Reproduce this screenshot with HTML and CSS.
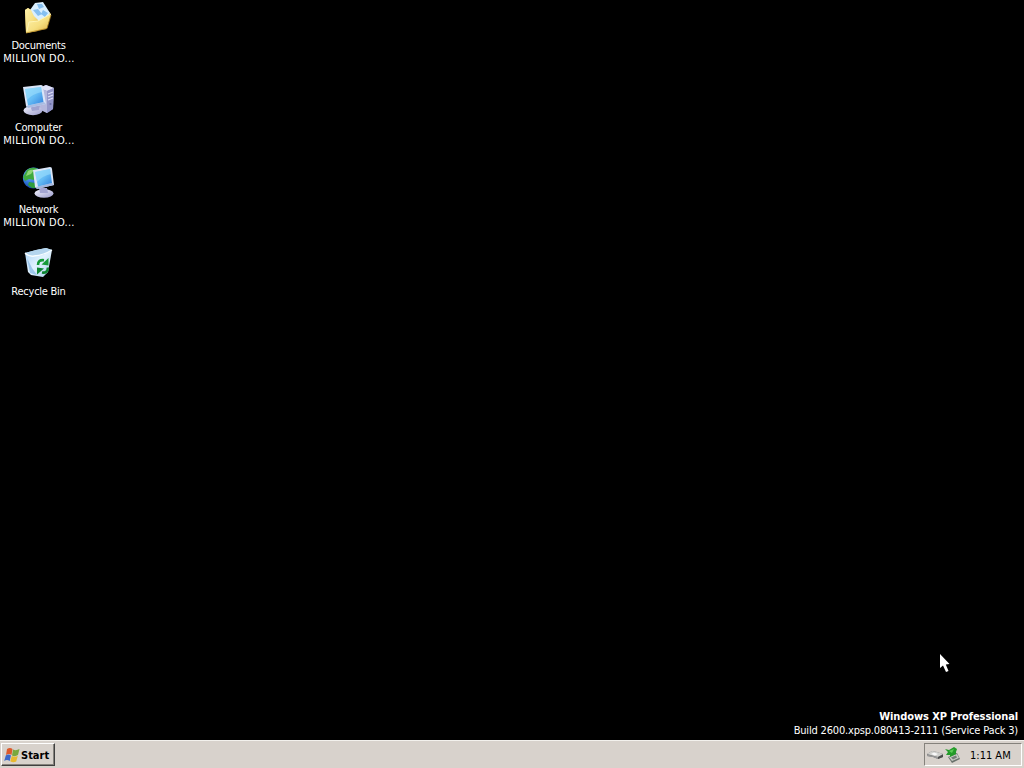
FILE: index.html
```html
<!DOCTYPE html>
<html lang="en">
<head>
  <meta charset="UTF-8" />
  <meta name="viewport" content="width=device-width, initial-scale=1.0" />
  <title>Desktop</title>
  <link rel="stylesheet" href="styles.css">
</head>
<body>
  <main class="desktop">
    <div class="icons">
      <div class="shortcut">
        <svg width="32" height="32" viewBox="0 0 32 32">
          <defs>
            <linearGradient id="folder" x1="0" y1="0" x2="1" y2="1">
              <stop offset="0" stop-color="#fff3ae" />
              <stop offset="0.55" stop-color="#f6df80" />
              <stop offset="1" stop-color="#dcae3f" />
            </linearGradient>
            <linearGradient id="screen" x1="0" y1="0" x2="1" y2="1">
              <stop offset="0" stop-color="#7fd4fb" />
              <stop offset="0.5" stop-color="#66bdf5" />
              <stop offset="1" stop-color="#2f7fdc" />
            </linearGradient>
            <linearGradient id="metal" x1="0" y1="0" x2="1" y2="1">
              <stop offset="0" stop-color="#f4f5ff" />
              <stop offset="1" stop-color="#9a9bcb" />
            </linearGradient>
          </defs>
          <path d="M3 8 L6 6 L9 8 L12 11 L26 9 L29 12 L24 27 L4 31 Z" fill="#e3bd55" />
          <path d="M8 8 L13 1 L21 0 L28 11 L21 21 L12 17 Z" fill="#d9efff" />
          <path d="M15 2 L20 2 L22 5 L17 7 Z M11 8 L16 7 L20 12 L16 14 Z M21 8 L26 11 L23 15 L19 12 Z" fill="#85bff0" />
          <path d="M3 8 L6 6 L9 8 L12 14 L16 18 L16 29 L4 31 Z" fill="url(#folder)" />
          <path d="M4 31 L7 20 L16 19 L29 12 L25 26 Z" fill="url(#folder)" />
          <path d="M5 29 L7 20 L16 19 L29 12" fill="none" stroke="#fff5b5" stroke-width="1" />
          <path d="M4 31 L25 26.5 L29 13" fill="none" stroke="#b88b28" stroke-width="0.8" />
        </svg>
        <span class="label">Documents</span>
        <span class="owner">MILLION DO...</span>
      </div>

      <div class="shortcut">
        <svg width="32" height="32" viewBox="0 0 32 32">
          <path d="M17 4 L24 1 L32 4 L31 25 L25 29 L17 25 Z" fill="#8f93c4" />
          <path d="M17 4 L24 1 L32 4 L25 7 Z" fill="#dfe2f7" />
          <path d="M17 4 L25 7 L25 29 L17 25 Z" fill="#b4b7dc" />
          <path d="M25 7 L32 4 L31 25 L25 29 Z" fill="#9396c8" />
          <path d="M26 10 L31 8 M26 13 L31 11 M26 16 L31 14" stroke="#dfe1f8" stroke-width="1.2" />
          <circle cx="28.5" cy="20" r="1.1" fill="#6d70aa" />
          <ellipse cx="11" cy="26.5" rx="9.5" ry="4.7" fill="url(#metal)" />
          <path d="M8 21 L18 21 L17 26 L10 27 Z" fill="#9fa3d0" />
          <path d="M1 3 L19 1 Q21 1 21 3 L24 20 L6 24 L4 22 Z" fill="#dbe6f8" />
          <path d="M24 20 L6 24 L4 22 L22 18 Z" fill="#a9bce2" />
          <path d="M3 5 L19 3 L21.5 18 L6 21.5 Z" fill="url(#screen)" />
          <path d="M3 5 L19 3 L20 8 Q10 10 5 16 Z" fill="#a7e3fd" opacity="0.5" />
        </svg>
        <span class="label">Computer</span>
        <span class="owner">MILLION DO...</span>
      </div>

      <div class="shortcut">
        <svg width="32" height="32" viewBox="0 0 32 32">
          <defs>
            <radialGradient id="globe" cx="0.35" cy="0.3" r="0.75">
              <stop offset="0" stop-color="#7fc0ff" />
              <stop offset="0.6" stop-color="#2f72d8" />
              <stop offset="1" stop-color="#123c9a" />
            </radialGradient>
          </defs>
          <circle cx="11.5" cy="12" r="10.6" fill="url(#globe)" />
          <path d="M5 4 Q10 0 16 3 L17 7 L12 9 L12 14 L7 13 L3 15 L1 11 Z" fill="#3faa3e" />
          <path d="M6 5 Q9 3 12 4 L9 8 L4 10 Z" fill="#8fd676" />
          <path d="M7 16 L13 17 L14 22 L10 22 L6 19 Z" fill="#2f9c3e" />
          <ellipse cx="22" cy="27.5" rx="9.5" ry="4.2" fill="url(#metal)" />
          <path d="M17 22 L25 22 L26 27 L18 27 Z" fill="#a3a5d1" />
          <path d="M11 4 L28 1 Q30 1 30 3 L32 19 L15 23 L13 21 Z" fill="#dbe6f8" />
          <path d="M32 19 L15 23 L14 21 L30 17 Z" fill="#a3b6df" />
          <path d="M13 6 L28 3 L30 17 L16 20.5 Z" fill="url(#screen)" />
          <path d="M13 6 L28 3 L29 8 Q20 10 15 16 Z" fill="#a7e3fd" opacity="0.5" />
        </svg>
        <span class="label">Network</span>
        <span class="owner">MILLION DO...</span>
      </div>

      <div class="shortcut">
        <svg width="32" height="32" viewBox="0 0 32 32">
          <defs>
            <linearGradient id="bin" x1="0" y1="0" x2="1" y2="1">
              <stop offset="0" stop-color="#a5d0f5" />
              <stop offset="0.5" stop-color="#e2f3ff" />
              <stop offset="1" stop-color="#a5cdea" />
            </linearGradient>
          </defs>
          <path d="M3 5 L14 2 L24 0 L30 2 L26 24 L21 29 L9 27 L6 24 Z" fill="url(#bin)" />
          <path d="M3 5 L14 2 L24 0 L30 2 L21 7 L11 8 Z" fill="#b4d5ee" />
          <path d="M3 5 Q7 9 12 8 Q22 7 30 2" fill="none" stroke="#f7fdff" stroke-width="1.4" />
          <path d="M5 10 L8 25 L15 27 L10 20 Z" fill="#88bae5" opacity="0.75" />
          <path d="M16 17 Q16 11.5 22 12.2" fill="none" stroke="#159a38" stroke-width="2.6" />
          <path d="M26.5 10 L26.5 17.5 L19.5 16.5 Z" fill="#159a38" />
          <path d="M26 19.5 Q25.5 25.5 20 24.5" fill="none" stroke="#0c8430" stroke-width="2.6" />
          <path d="M15 26.5 L15 19.5 L22 20.5 Z" fill="#0c8430" />
        </svg>
        <span class="label">Recycle Bin</span>
      </div>
    </div>

    <div class="version">
      <div class="edition">Windows XP Professional</div>
      <div class="build">Build 2600.xpsp.080413-2111 (Service Pack 3)</div>
    </div>

    <svg class="cursor" width="12" height="20" viewBox="0 0 12 20">
      <path d="M0 0 L0 14 L3 11.5 L6 18 L8.5 17 L5.8 10.5 L9.5 10 Z" fill="#fff" />
    </svg>
  </main>

  <footer class="taskbar">
    <button class="start">
      <svg width="16" height="15" viewBox="0 0 16 15">
        <path d="M3 1 Q6 -1 8.5 1 L7.5 7 Q5 5 2 7 Z" fill="#dd5a2c" />
        <path d="M9 1.5 Q12 3 15.5 1 L14 7 Q11 9 8 7.5 Z" fill="#79a83d" />
        <path d="M1.8 7.5 Q4.5 5.5 7 7.5 L5.7 13 Q3 11 .2 13 Z" fill="#3c68c9" />
        <path d="M7.8 8 Q10.5 9.5 13.8 8 L12.2 13.5 Q9 15 6.3 13.3 Z" fill="#e8b92f" />
      </svg>
      <span>Start</span>
    </button>

    <div class="tray">
      <svg width="17" height="16" viewBox="0 0 17 16">
        <path d="M0 7 L5 4 L10 5 L16 7 L16 10 L11 12 L6 10 L0 9 Z" fill="#777" />
        <path d="M0 7 L5 4 L10 5 L16 7 L11 10 Z" fill="#d0d0cd" />
        <path d="M4 7 L7 5.5 L11 7 L8 8.5 Z" fill="#fafafa" />
        <path d="M11 10 L16 7.5 L16 10 L11 12 Z" fill="#4b4b4b" />
        <path d="M0 7.5 L6 9 L11 10 L11 12 L6 10 L0 9 Z" fill="#999" />
      </svg>
      <svg width="16" height="16" viewBox="0 0 16 16">
        <path d="M3 10 L12 6 L15 12 L7 16 Z" fill="#69716b" />
        <path d="M4 10 L12 7 L14 11 L7 14 Z" fill="#c9cdc6" />
        <path d="M6 10.5 L11 8.5 L12 10.5 L8 12.5 Z" fill="#747d77" />
        <path d="M0 2 L4 3 L9 0 L12 2 L11 5 L11 7 L5 10 L5 8 L1 8 L3 5 Z" fill="#239b29" />
        <path d="M4 4 L9 2 L7 6 Z" fill="#5ccc55" />
      </svg>
      <span class="clock">1:11 AM</span>
    </div>
  </footer>
</body>
</html>
```

FILE: styles.css
```css
body {
  margin: 0;
  height: 768px;
  overflow: hidden;
  display: flex;
  flex-direction: column;
  background: #000;
  font-family: "DejaVu Sans Condensed", "DejaVu Sans", sans-serif;
  font-stretch: condensed;
  font-size: 11px;
}
svg { display: block; flex: none; }

.desktop {
  position: relative;
  flex: 1;
  display: flex;
  justify-content: space-between;
  color: #fff;
}
.icons { width: 76px; padding-top: 2px; }
.shortcut {
  height: 82px;
  display: flex;
  flex-direction: column;
  align-items: center;
  line-height: 13px;
  text-align: center;
  white-space: nowrap;
}
.label { margin: 5px 0 0 1px; letter-spacing: -0.25px; }
.owner { margin-left: 2px; letter-spacing: 0.25px; }
.version {
  align-self: flex-end;
  padding: 0 6px 2px 0;
  line-height: 14px;
  text-align: right;
}
.edition { font-weight: bold; letter-spacing: -0.1px; }
.build { letter-spacing: -0.18px; }
.cursor { position: absolute; left: 940px; top: 654px; }

.taskbar {
  height: 26px;
  padding: 1px 2px 0 1px;
  display: flex;
  justify-content: space-between;
  align-items: flex-start;
  background: #d8d2cc;
  border-top: 1px solid #f3f1ed;
}
.start {
  width: 54px;
  height: 23px;
  margin-top: 1px;
  padding: 1px 2px 0;
  display: flex;
  align-items: center;
  gap: 1px;
  background: #d8d2cc;
  border: 1px solid;
  border-color: #fff #404040 #404040 #fff;
  box-shadow: inset -1px -1px #85827c;
  font: inherit;
  font-weight: bold;
  color: #000;
}
.tray {
  width: 94px;
  height: 21px;
  margin-top: 1px;
  padding-left: 2px;
  display: flex;
  align-items: center;
  gap: 1px;
  border: 1px solid;
  border-color: #85827c #fff #fff #85827c;
}
.clock { margin: 1px 0 0 8px; }
```
